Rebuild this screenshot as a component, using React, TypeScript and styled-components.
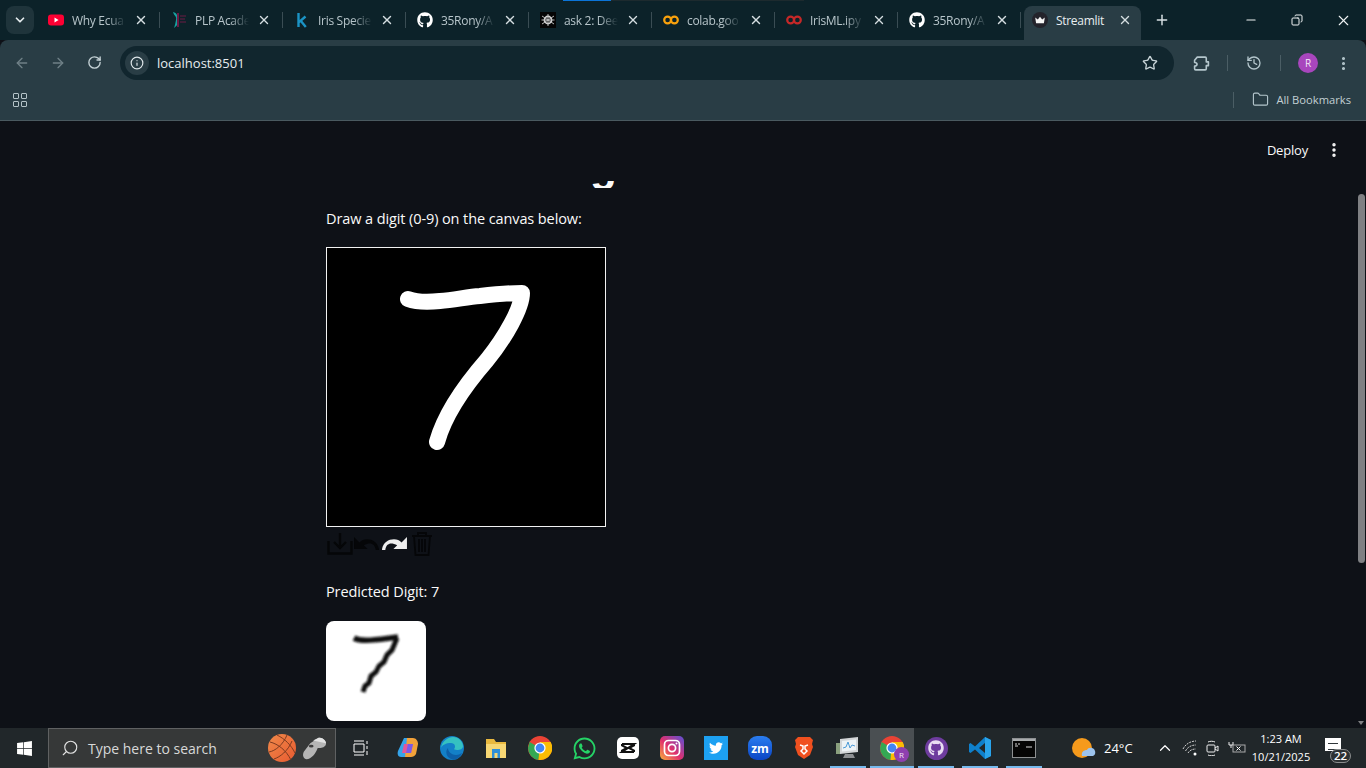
import { ReactNode } from "react";
import styled, { createGlobalStyle } from "styled-components";
import {
  ArrowLeft,
  ArrowRight,
  ChevronDown,
  ChevronUp,
  Copy,
  EllipsisVertical,
  Folder,
  History,
  Info,
  Minus,
  Plus,
  RotateCw,
  Search,
  Star,
  X,
} from "lucide-react";
import { FaGithub, FaTwitter, FaWhatsapp, FaWindows } from "react-icons/fa";

const GlobalStyle = createGlobalStyle`
  html, body {
    margin: 0;
    height: 100%;
    overflow: hidden;
    background: #0e1117;
  }
  * { box-sizing: border-box; }
`;

const Screen = styled.div`
  width: 1366px;
  height: 768px;
  display: flex;
  flex-direction: column;
  overflow: hidden;
  font-family: "Open Sans", "Liberation Sans", sans-serif;
`;

const Mirrored = styled.span`
  display: flex;
  transform: scaleX(-1);
`;

/* ---------- tab strip ---------- */

const TabStrip = styled.div`
  position: relative;
  height: 40px;
  flex: none;
  display: flex;
  align-items: flex-end;
  padding-left: 6px;
  background: #0c2229;
`;

const LoadBar = styled.div`
  position: absolute;
  top: 0;
  left: 563px;
  width: 241px;
  height: 1px;
  background: linear-gradient(to right, #0b74d8 0 48px, #1d2a2e 48px);
`;

const TabMenu = styled.div`
  width: 28px;
  height: 28px;
  margin: 0 3px 6px 0;
  border-radius: 8px;
  background: #1f343b;
  color: #e4ebee;
  display: flex;
  align-items: center;
  justify-content: center;
`;

const Tab = styled.div`
  position: relative;
  width: 123px;
  height: 40px;
  display: flex;
  align-items: center;
  padding: 0 11px;
  gap: 8px;
  color: #b7c5ca;

  &::after {
    content: "";
    position: absolute;
    right: 0;
    top: 12px;
    width: 1px;
    height: 16px;
    background: #3a4d54;
  }
`;

const ActiveTab = styled(Tab)`
  width: 117px;
  height: 34px;
  margin-left: 3px;
  padding: 0 8px 6px;
  border-radius: 8px 8px 0 0;
  background: #293d45;
  color: #e8eef0;

  &::after {
    display: none;
  }
`;

const Favicon = styled.span`
  width: 16px;
  height: 16px;
  flex: none;
  display: flex;
  align-items: center;
  justify-content: center;
`;

const TabTitle = styled.span<{ $fade?: boolean }>`
  width: 54px;
  flex: none;
  font-size: 12px;
  letter-spacing: -0.3px;
  white-space: nowrap;
  overflow: hidden;
  -webkit-mask-image: ${({ $fade }) =>
    $fade ? "linear-gradient(to right, #000 65%, transparent)" : "none"};
  mask-image: ${({ $fade }) =>
    $fade ? "linear-gradient(to right, #000 65%, transparent)" : "none"};
`;

const TabClose = styled.span`
  color: #d5dee1;
  display: flex;
`;

const NewTab = styled.div`
  margin: 0 0 12px 13px;
  color: #d7e0e3;
  display: flex;
`;

const WindowControls = styled.div`
  margin-left: auto;
  align-self: stretch;
  display: flex;
  color: #f0f3f4;
`;

const WindowButton = styled.div`
  width: 46px;
  display: flex;
  align-items: center;
  justify-content: center;
`;

/* ---------- toolbar ---------- */

const Toolbar = styled.div`
  height: 41px;
  flex: none;
  padding-top: 5px;
  display: flex;
  align-items: center;
  background: #293d45;
  border-radius: 8px 8px 0 0;
  color: #b4c3c8;
`;

const NavButton = styled.div<{ $dim?: boolean }>`
  width: 36px;
  display: flex;
  justify-content: center;
  color: ${({ $dim }) => ($dim ? "#6f8087" : "#c4d1d5")};
`;

const NavGroup = styled.div`
  width: 120px;
  padding-left: 4px;
  display: flex;
`;

const Omnibox = styled.div`
  width: 1054px;
  height: 34px;
  padding: 0 16px 0 5px;
  display: flex;
  align-items: center;
  border-radius: 17px;
  background: #11262e;
`;

const SiteChip = styled.div`
  width: 24px;
  height: 24px;
  border-radius: 50%;
  background: #293d45;
  color: #dfe7ea;
  display: flex;
  align-items: center;
  justify-content: center;
`;

const Url = styled.span`
  margin-left: 8px;
  font-size: 13px;
  color: #e6edf0;
  flex: 1;
`;

const ToolIcons = styled.div`
  flex: 1;
  display: flex;
  align-items: center;
`;

const ToolSeparator = styled.span<{ $left: number }>`
  width: 1px;
  height: 16px;
  margin-left: ${({ $left }) => $left}px;
  background: #4b5e65;
`;

const ToolIcon = styled.span<{ $left: number }>`
  margin-left: ${({ $left }) => $left}px;
  display: flex;
  color: #b4c6cc;
`;

const Avatar = styled.span`
  width: 20px;
  height: 20px;
  margin-left: 17px;
  border-radius: 50%;
  background: #a846bd;
  color: #f3e6f6;
  font-size: 10px;
  display: flex;
  align-items: center;
  justify-content: center;
`;

/* ---------- bookmarks ---------- */

const BookmarkBar = styled.div`
  height: 40px;
  flex: none;
  display: flex;
  align-items: center;
  padding: 0 15px 2px 13px;
  background: #293d45;
  border-bottom: 1px solid #4a5a60;
  color: #b4c6cc;
`;

const AppsGrid = styled.div`
  width: 14px;
  display: grid;
  grid-template-columns: 6px 6px;
  gap: 2px;
`;

const AppsCell = styled.span`
  height: 6px;
  border: 1.5px solid #b4c3c8;
  border-radius: 1px;
`;

const BookmarkSeparator = styled.span`
  width: 1px;
  height: 16px;
  margin-left: auto;
  background: #4b5e65;
`;

const BookmarkLabel = styled.span`
  margin-left: 7px;
  font-size: 11.2px;
  color: #c3d0d4;
  white-space: nowrap;
`;

/* ---------- streamlit page ---------- */

const Page = styled.div`
  flex: 1;
  min-height: 0;
  display: flex;
  background: #0e1117;
`;

const Main = styled.div`
  flex: 1;
  overflow: hidden;
`;

const AppHeader = styled.div`
  height: 59px;
  padding: 0 14px 2px 0;
  display: flex;
  align-items: center;
  justify-content: flex-end;
  gap: 17px;
  color: #fafafa;
`;

const DeployLabel = styled.span`
  font-size: 13px;
  font-weight: 500;
  letter-spacing: -0.2px;
`;

const Column = styled.div`
  width: 705px;
  margin: 0 auto;
`;

const ClippedTitle = styled.div`
  height: 7px;
  margin: 1px 0 20px;
  overflow: hidden;
  padding-left: 264px;
  color: #fafafa;
  font-family: "Liberation Sans", sans-serif;
  font-size: 44px;
  font-weight: 700;
  line-height: 44px;
`;

const TitleTail = styled.div`
  margin-top: -37px;
`;

const BodyText = styled.p`
  margin: 0;
  height: 22px;
  font-size: 14.5px;
  font-weight: 500;
  line-height: 22px;
  color: #fafafa;
  letter-spacing: -0.1px;
`;

const CanvasFrame = styled.div`
  width: 280px;
  height: 280px;
  margin-top: 17px;
  border: 1px solid #f2f2f2;
  background: #000;
`;

const CanvasTools = styled.div`
  height: 26px;
  margin-top: 3px;
  display: flex;
  align-items: center;
`;

const ToolSlot = styled.span<{ $left: number }>`
  margin-left: ${({ $left }) => $left}px;
  display: flex;
`;

const Prediction = styled(BodyText)`
  margin-top: 25px;
`;

const DigitThumb = styled.div`
  width: 100px;
  height: 100px;
  margin-top: 18px;
  border-radius: 8px;
  background: #fff;
  overflow: hidden;
`;

const Scrollbar = styled.div`
  position: relative;
  width: 9px;
  background: #0e1117;
`;

const ScrollThumb = styled.div`
  position: absolute;
  top: 73px;
  left: 1px;
  width: 7px;
  height: 369px;
  border-radius: 4px;
  background: #7f8083;
`;

const ScrollArrow = styled.div`
  position: absolute;
  bottom: 3px;
  left: 1px;
  width: 0;
  height: 0;
  border-left: 3.5px solid transparent;
  border-right: 3.5px solid transparent;
  border-top: 4px solid #7f8083;
`;

/* ---------- taskbar ---------- */

const Taskbar = styled.div`
  height: 40px;
  flex: none;
  display: flex;
  align-items: center;
  background: #21272a;
  color: #fff;
`;

const StartButton = styled.div`
  width: 48px;
  display: flex;
  justify-content: center;
`;

const SearchBox = styled.div`
  width: 288px;
  height: 40px;
  padding: 0 8px 0 12px;
  display: flex;
  align-items: center;
  gap: 5px;
  background: #363838;
  border: 1px solid #5f6162;
  color: #e3e3e3;
`;

const SearchLabel = styled.span`
  margin-left: 4px;
  flex: 1;
  font-size: 14px;
  color: #d8d8d8;
`;

const TaskIcons = styled.div`
  display: flex;
`;

const TaskIcon = styled.div<{ $open?: boolean; $active?: boolean; $width?: number }>`
  position: relative;
  width: ${({ $width }) => $width ?? 44}px;
  height: 40px;
  display: flex;
  align-items: center;
  justify-content: center;
  background: ${({ $active }) => ($active ? "#4a4f52" : "transparent")};

  &::after {
    content: "";
    display: ${({ $open }) => ($open ? "block" : "none")};
    position: absolute;
    left: ${({ $active }) => ($active ? "0" : "4px")};
    right: ${({ $active }) => ($active ? "0" : "4px")};
    bottom: 0;
    height: 2px;
    background: #76b9ed;
  }
`;

const Tray = styled.div`
  margin-left: auto;
  display: flex;
  align-items: center;
  height: 100%;
`;

const Temperature = styled.span`
  margin-left: 8px;
  width: 44px;
  font-size: 13px;
`;

const TrayIcon = styled.span<{ $left: number }>`
  margin-left: ${({ $left }) => $left}px;
  display: flex;
`;

const Clock = styled.div`
  width: 64px;
  margin-left: 3px;
  text-align: center;
  font-size: 11px;
  line-height: 18px;
`;

const Notice = styled.div`
  position: relative;
  width: 53px;
  height: 100%;
  padding-left: 12px;
  display: flex;
  align-items: center;
`;

const NoticeGlyph = styled.span`
  width: 16px;
  height: 13px;
  margin-top: -7px;
  background: repeating-linear-gradient(
      to bottom,
      transparent 0 3px,
      #30363a 3px 4px,
      transparent 4px 6px
    )
    3px 2px / 10px 10px no-repeat #fff;
`;

const NoticeBadge = styled.span`
  position: absolute;
  right: 15px;
  bottom: 5px;
  width: 21px;
  height: 14px;
  border-radius: 7px;
  border: 1px solid #8a8d8e;
  background: #2d3234;
  font-size: 11.5px;
  font-weight: 600;
  line-height: 12px;
  text-align: center;
`;

/* ---------- drawings ---------- */

const Svg = ({ size = 16, box = "0 0 16 16", children }: { size?: number; box?: string; children: ReactNode }) => (
  <svg width={size} height={size} viewBox={box} fill="none">
    {children}
  </svg>
);

const YoutubeIcon = () => (
  <Svg>
    <rect x="0" y="2.500" width="16" height="11" rx="3" fill="#ff0033" />
    <path d="M6.500 5.600 10.600 8l-4.100 2.400z" fill="#fff" />
  </Svg>
);

const PlpIcon = () => (
  <Svg>
    <path d="M2 0c1 4 4 4 3 8-.5 3-1 5-2 8 3-2 5-5 4.500-8C7 4 6 1 2 0z" fill="#17a0a0" />
    <path d="M6 1h2v14H6z" fill="#6d1a44" />
    <path d="M9 4h6M9 7h5M9 10h6" stroke="#6d1a44" strokeWidth="1" />
  </Svg>
);

const KaggleIcon = () => (
  <Svg>
    <path d="M4.500 1v14M11.500 4.500 5 10.200M6.500 8.600 11.800 15" stroke="#1b93c4" strokeWidth="2.400" />
  </Svg>
);

const SpiderIcon = () => (
  <Svg>
    <rect width="16" height="16" fill="#050505" />
    <circle cx="8" cy="8" r="3.600" stroke="#d8d8d8" strokeWidth="1.600" />
    <path d="M8 2v12M2 4l12 8M14 4 2 12M1.500 8h13" stroke="#bcbcbc" strokeWidth="1" />
  </Svg>
);

const ColabIcon = ({ color }: { color: string }) => (
  <Svg>
    <circle cx="4.600" cy="8" r="3.400" stroke={color} strokeWidth="2.200" />
    <circle cx="11.400" cy="8" r="3.400" stroke={color} strokeWidth="2.200" />
  </Svg>
);

const CrownIcon = () => (
  <Svg>
    <circle cx="8" cy="8" r="8" fill="#23232b" />
    <path d="M3.200 5.500 5.800 7.500 8 4.800l2.200 2.700 2.600-2-.9 5.700H4.100z" fill="#f5f5f5" />
  </Svg>
);

const PuzzleIcon = () => (
  <Svg size={17}>
    <path
      d="M4 2h7.500a1 1 0 0 1 1 1v3.500h2v3.500h-2v3a1 1 0 0 1-1 1H2.500a1 1 0 0 1-1-1v-2.500c1.800 0 2.300-1 2.300-1.800s-.8-1.700-2.300-1.700V5z"
      stroke="#b4c6cc"
      strokeWidth="1.500"
      strokeLinejoin="round"
    />
  </Svg>
);

const BasketballIcon = () => (
  <Svg size={28} box="0 0 28 28">
    <defs>
      <linearGradient id="ball" x1="0" y1="0" x2="1" y2="1">
        <stop offset="0" stopColor="#f08a4a" />
        <stop offset="1" stopColor="#e85a30" />
      </linearGradient>
    </defs>
    <circle cx="14" cy="14" r="14" fill="url(#ball)" />
    <path d="M2 8c8 2 16 8 21 18M9 1c8 4 14 10 18 18M1 18c6-1 14-7 18-17M6 25c6-2 14-8 18-18" stroke="#7c3a20" strokeWidth="1" />
  </Svg>
);

const WhistleIcon = () => (
  <Svg size={26} box="0 0 28 28">
    <path d="M10 9 19 3c4-1 8 3 8 6s-3 5-6 5h-3c-2 6-7 12-12 12C3 26 1 22 3 18z" fill="#b5b5b5" />
    <path d="M13 6 19 3c4-1 8 3 8 6l-9-2z" fill="#e2e2e2" />
    <ellipse cx="11" cy="12" rx="2.500" ry="1.500" fill="#3d3d3d" />
  </Svg>
);

const ChromeIcon = ({ size = 24 }: { size?: number }) => (
  <Svg size={size} box="0 0 24 24">
    <circle cx="12" cy="12" r="12" fill="#ea4335" />
    <path d="M12 12 1.600 6 0 12a12 12 0 0 0 10.500 11.900z" fill="#34a853" />
    <path d="M12 6h10.600A12 12 0 0 1 12 24l-1.500-.1z" fill="#fbbc04" />
    <circle cx="12" cy="12" r="5.600" fill="#fff" />
    <circle cx="12" cy="12" r="4.400" fill="#4285f4" />
  </Svg>
);

const CopilotIcon = () => (
  <Svg size={24} box="0 0 24 24">
    <path d="M8 2h5l-3 19H5c-3 0-4-3-3-6z" fill="#35a4ea" />
    <path d="M11 2h6c3 0 5 3 5 6l-2 10c-1 2-3 3-5 3H9z" fill="#f2a23a" />
    <path d="M8 8h9l-2 9H6z" fill="#e2569a" />
    <path d="M12 8h5l-2 9h-5z" fill="#7b5be6" />
  </Svg>
);

const EdgeIcon = () => (
  <Svg size={24} box="0 0 24 24">
    <circle cx="12" cy="12" r="12" fill="#1380c8" />
    <path d="M1 12C2 5 8 1 13 1c6 0 10 5 10 9 0 3-3 4-6 4-2 0-3-1-3-1 2-2 1-6-3-6-5 0-9 2-10 5z" fill="#35c1c1" />
    <path d="M11 23c-5-2-6-8-3-11 0 4 4 7 8 7 2 0 4-1 6-2-2 5-7 8-11 6z" fill="#0d5fa8" />
  </Svg>
);

const ExplorerIcon = () => (
  <Svg size={24} box="0 0 24 24">
    <path d="M2 3h8l2 3h10v16H2z" fill="#e9b93f" />
    <path d="M2 8h20v14H2z" fill="#f7d774" />
    <rect x="8" y="13" width="8" height="9" fill="#2f8fd8" />
    <rect x="10.500" y="17" width="3" height="5" fill="#f7d774" />
  </Svg>
);

const CapcutIcon = () => (
  <Svg size={22} box="0 0 22 22">
    <rect width="22" height="22" rx="5" fill="#fff" />
    <path d="M5 7h12L5 15h12M5 7v1.500l5 2.500-5 2.500V15M17 7v1.500L12 11l5 2.500V15" stroke="#111" strokeWidth="2" />
  </Svg>
);

const InstagramIcon = () => (
  <Svg size={24} box="0 0 24 24">
    <defs>
      <linearGradient id="ig" x1="0" y1="1" x2="1" y2="0">
        <stop offset="0" stopColor="#f9b13c" />
        <stop offset=".45" stopColor="#e1306c" />
        <stop offset="1" stopColor="#5b51d8" />
      </linearGradient>
    </defs>
    <rect width="24" height="24" rx="5" fill="url(#ig)" />
    <rect x="4.500" y="4.500" width="15" height="15" rx="4" stroke="#fff" strokeWidth="1.700" />
    <circle cx="12" cy="12" r="3.600" stroke="#fff" strokeWidth="1.700" />
    <circle cx="16.500" cy="7.500" r="1" fill="#fff" />
  </Svg>
);

const TwitterTile = styled.span`
  width: 24px;
  height: 24px;
  background: #1da1f2;
  display: flex;
  align-items: center;
  justify-content: center;
`;

const ZoomTile = styled.span`
  width: 24px;
  height: 24px;
  border-radius: 9px;
  background: linear-gradient(#2a7df0, #0b45c4);
  color: #fff;
  font-size: 12px;
  font-weight: 700;
  display: flex;
  align-items: center;
  justify-content: center;
`;

const BraveIcon = () => (
  <Svg size={24} box="0 0 24 24">
    <path d="M6 1h12l3 3-1 4 1 3-3 8-6 4-6-4-3-8 1-3-1-4z" fill="#f0501f" />
    <path d="M8 9l3 1v3l-2 2 3 3 3-3-2-2v-3l3-1" stroke="#fff" strokeWidth="1.500" />
  </Svg>
);

const MonitorIcon = () => (
  <Svg size={24} box="0 0 24 24">
    <path d="M4 3 22 1v15L4 18z" fill="#d3d6d8" />
    <path d="M6 5 20 3.500V14L6 15.500z" fill="#eef3f6" />
    <path d="M7 12l3-1 2-5 2 6 2-3 3 1" stroke="#4c9ad6" />
    <path d="M9 18h8l2 4H7z" fill="#8d9093" />
    <rect x="0" y="7" width="4" height="11" fill="#8aa07e" />
  </Svg>
);

const AvatarDot = styled.span`
  position: absolute;
  left: 24px;
  top: 19px;
  width: 15px;
  height: 15px;
  border-radius: 50%;
  background: #8e3fb0;
  color: #f2e6f6;
  font-size: 8px;
  line-height: 15px;
  text-align: center;
`;

const GithubBadge = styled.span`
  width: 23px;
  height: 23px;
  border-radius: 50%;
  background: #6e3c9e;
  display: flex;
  align-items: center;
  justify-content: center;
`;

const VscodeIcon = () => (
  <Svg size={24} box="0 0 24 24">
    <path d="M17 1l6 3v16l-6 3L7 13.500 2.500 17 1 16v-8l1.500-1L7 10.500z" fill="#0f80cc" />
    <path d="M17 1l6 3v16l-6 3z" fill="#29a4ec" />
    <path d="M17 7v10l-6-5z" fill="#21272a" />
  </Svg>
);

const CmdIcon = () => (
  <Svg size={24} box="0 0 24 24">
    <rect x=".5" y="2.500" width="23" height="19" fill="#050505" stroke="#8d9092" />
    <rect x="1" y="3" width="22" height="2" fill="#a8abad" />
    <path d="M3 8h2M6 8h2M3 10h3M14 11h6" stroke="#d8d8d8" />
  </Svg>
);

const WeatherIcon = () => (
  <Svg size={24} box="0 0 24 24">
    <circle cx="10" cy="12" r="10" fill="#f59a1c" />
    <path d="M10 20c-1-4 2-6 5-6 1-3 7-3 8 1 1 3-1 5-3 5z" fill="#9cc3ee" />
  </Svg>
);

const WifiIcon = () => (
  <Svg>
    <path d="M1 9c3-6 9-8 13-8M3.500 11c2-4 6-6 10.500-6M6 13c1.500-2.500 4-4 8-4" stroke="#d0d0d0" strokeDasharray="2 1" />
    <circle cx="13" cy="14" r="1.500" fill="#fff" />
  </Svg>
);

const MeetIcon = () => (
  <Svg>
    <rect x="2" y="5" width="8" height="7" rx="1" stroke="#eee" />
    <path d="M10 8l3-2v5l-3-2M3 2c2-1 5-1 7 0M3 15c2 1 5 1 7 0" stroke="#eee" />
  </Svg>
);

const BatteryIcon = () => (
  <Svg size={18} box="0 0 18 16">
    <path d="M1 2v3h4V2M3 5v3" stroke="#eee" />
    <rect x="5" y="5" width="12" height="7" stroke="#aaa" />
    <path d="M8.500 6.500l4 4m0-4-4 4" stroke="#fff" />
  </Svg>
);

const DownloadTool = () => (
  <svg width="26" height="23" viewBox="0 0 26 23" fill="none" stroke="#050608" strokeWidth="2.400">
    <path d="M1.500 9v12.500h23V9M13 1v15M7 10l6 6 6-6" />
  </svg>
);

const REDO_PATH =
  "M0 11C1 5 6 2 11 2c3 0 5 1 7 3l5-5v11H10.500l3.500-3.500C12 6.500 10 6 8.500 6 5.500 6 3.500 8 3 12H0z";

const RedoTool = ({ color }: { color: string }) => (
  <svg width="25" height="13" viewBox="0 0 23 12">
    <path d={REDO_PATH} fill={color} />
  </svg>
);

const TrashTool = () => (
  <svg width="22" height="25" viewBox="0 0 22 25" fill="none" stroke="#050608" strokeWidth="1.800">
    <path d="M1 5h20M7 5V2h8v3M3 5l1.500 19h13L19 5M8 8v13M11 8v13M14 8v13" />
  </svg>
);

const tabs: { title: string; icon: ReactNode }[] = [
  { title: "Why Ecua", icon: <YoutubeIcon /> },
  { title: "PLP Acade", icon: <PlpIcon /> },
  { title: "Iris Specie", icon: <KaggleIcon /> },
  { title: "35Rony/A", icon: <FaGithub size={16} color="#fff" /> },
  { title: "ask 2: Dee", icon: <SpiderIcon /> },
  { title: "colab.goo", icon: <ColabIcon color="#f9a10c" /> },
  { title: "IrisML.ipy", icon: <ColabIcon color="#c62828" /> },
  { title: "35Rony/A", icon: <FaGithub size={16} color="#fff" /> },
];

const App = () => (
  <Screen>
    <GlobalStyle />
    <TabStrip>
      <LoadBar />
      <TabMenu>
        <ChevronDown size={14} strokeWidth={3} />
      </TabMenu>
      {tabs.map((tab, index) => (
        <Tab key={index}>
          <Favicon>{tab.icon}</Favicon>
          <TabTitle $fade>{tab.title}</TabTitle>
          <TabClose>
            <X size={14} strokeWidth={2.4} />
          </TabClose>
        </Tab>
      ))}
      <ActiveTab>
        <Favicon>
          <CrownIcon />
        </Favicon>
        <TabTitle>Streamlit</TabTitle>
        <TabClose>
          <X size={14} strokeWidth={2.4} />
        </TabClose>
      </ActiveTab>
      <NewTab>
        <Plus size={16} strokeWidth={2.2} />
      </NewTab>
      <WindowControls>
        <WindowButton>
          <Minus size={14} />
        </WindowButton>
        <WindowButton>
          <Mirrored>
            <Copy size={12} />
          </Mirrored>
        </WindowButton>
        <WindowButton>
          <X size={17} strokeWidth={1.6} />
        </WindowButton>
      </WindowControls>
    </TabStrip>

    <Toolbar>
      <NavGroup>
        <NavButton $dim>
          <ArrowLeft size={16} />
        </NavButton>
        <NavButton $dim>
          <ArrowRight size={16} />
        </NavButton>
        <NavButton>
          <RotateCw size={15} strokeWidth={2.2} />
        </NavButton>
      </NavGroup>
      <Omnibox>
        <SiteChip>
          <Info size={14} />
        </SiteChip>
        <Url>localhost:8501</Url>
        <Star size={16} color="#c7d3d7" strokeWidth={2} />
      </Omnibox>
      <ToolIcons>
        <ToolIcon $left={19}>
          <PuzzleIcon />
        </ToolIcon>
        <ToolSeparator $left={17} />
        <ToolIcon $left={18}>
          <History size={16} strokeWidth={2} />
        </ToolIcon>
        <ToolSeparator $left={18} />
        <Avatar>R</Avatar>
        <ToolIcon $left={17}>
          <EllipsisVertical size={17} strokeWidth={2.4} />
        </ToolIcon>
      </ToolIcons>
    </Toolbar>

    <BookmarkBar>
      <AppsGrid>
        <AppsCell />
        <AppsCell />
        <AppsCell />
        <AppsCell />
      </AppsGrid>
      <BookmarkSeparator />
      <ToolIcon $left={18}>
        <Folder size={17} strokeWidth={1.6} />
      </ToolIcon>
      <BookmarkLabel>All Bookmarks</BookmarkLabel>
    </BookmarkBar>

    <Page>
      <Main>
        <AppHeader>
          <DeployLabel>Deploy</DeployLabel>
          <EllipsisVertical size={18} strokeWidth={2.6} />
        </AppHeader>
        <Column>
          <ClippedTitle>
            <TitleTail>g</TitleTail>
          </ClippedTitle>
          <BodyText>Draw a digit (0-9) on the canvas below:</BodyText>
          <CanvasFrame>
            <svg width="278" height="278" viewBox="0 0 278 278" fill="none">
              <path
                d="M81 51C92 55 104 54 113 53C127 52 140 49 153 48C170 46 185 45 195 45C195 60 178 90 160 112C140 135 118 165 110 194"
                stroke="#fff"
                strokeWidth="16"
                strokeLinecap="round"
                strokeLinejoin="round"
              />
            </svg>
          </CanvasFrame>
          <CanvasTools>
            <ToolSlot $left={1}>
              <DownloadTool />
            </ToolSlot>
            <ToolSlot $left={1}>
              <Mirrored>
                <RedoTool color="#050608" />
              </Mirrored>
            </ToolSlot>
            <ToolSlot $left={3}>
              <RedoTool color="#eeeeee" />
            </ToolSlot>
            <ToolSlot $left={4}>
              <TrashTool />
            </ToolSlot>
          </CanvasTools>
          <Prediction>Predicted Digit: 7</Prediction>
          <DigitThumb>
            <svg width="100" height="100" viewBox="0 0 100 100" fill="none">
              <defs>
                <filter id="soft">
                  <feGaussianBlur stdDeviation="0.8" />
                </filter>
              </defs>
              <g stroke="#111" filter="url(#soft)">
                <path d="M28 17C35 21 50 19 72 16" strokeWidth="5.500" />
                <path d="M71 17L66 29L61 34L58 41L53 45L50 51L45 55L43 62L39 65L37 71" strokeWidth="5" />
              </g>
            </svg>
          </DigitThumb>
        </Column>
      </Main>
      <Scrollbar>
        <ScrollThumb />
        <ScrollArrow />
      </Scrollbar>
    </Page>

    <Taskbar>
      <StartButton>
        <FaWindows size={17} />
      </StartButton>
      <SearchBox>
        <Mirrored>
          <Search size={18} strokeWidth={1.5} />
        </Mirrored>
        <SearchLabel>Type here to search</SearchLabel>
        <BasketballIcon />
        <WhistleIcon />
      </SearchBox>
      <TaskIcons>
        <TaskIcon $width={50}>
          <svg width="16" height="16" viewBox="0 0 16 16" fill="none" stroke="#fff">
            <path d="M1 1h10M1 15h10M1 4h10v8H1zM14 1v3M14 6v3M14 11v4" />
          </svg>
        </TaskIcon>
        <TaskIcon>
          <CopilotIcon />
        </TaskIcon>
        <TaskIcon>
          <EdgeIcon />
        </TaskIcon>
        <TaskIcon>
          <ExplorerIcon />
        </TaskIcon>
        <TaskIcon>
          <ChromeIcon />
        </TaskIcon>
        <TaskIcon>
          <FaWhatsapp size={25} color="#25d366" />
        </TaskIcon>
        <TaskIcon>
          <CapcutIcon />
        </TaskIcon>
        <TaskIcon>
          <InstagramIcon />
        </TaskIcon>
        <TaskIcon>
          <TwitterTile>
            <FaTwitter size={14} color="#fff" />
          </TwitterTile>
        </TaskIcon>
        <TaskIcon>
          <ZoomTile>zm</ZoomTile>
        </TaskIcon>
        <TaskIcon>
          <BraveIcon />
        </TaskIcon>
        <TaskIcon $open>
          <MonitorIcon />
        </TaskIcon>
        <TaskIcon $open $active>
          <ChromeIcon />
          <AvatarDot>R</AvatarDot>
        </TaskIcon>
        <TaskIcon $open>
          <GithubBadge>
            <FaGithub size={16} color="#e9def2" />
          </GithubBadge>
        </TaskIcon>
        <TaskIcon $open>
          <VscodeIcon />
        </TaskIcon>
        <TaskIcon $open>
          <CmdIcon />
        </TaskIcon>
      </TaskIcons>
      <Tray>
        <WeatherIcon />
        <Temperature>24°C</Temperature>
        <TrayIcon $left={8}>
          <ChevronUp size={18} strokeWidth={1.6} />
        </TrayIcon>
        <TrayIcon $left={8}>
          <WifiIcon />
        </TrayIcon>
        <TrayIcon $left={7}>
          <MeetIcon />
        </TrayIcon>
        <TrayIcon $left={7}>
          <BatteryIcon />
        </TrayIcon>
        <Clock>
          1:23 AM
          <br />
          10/21/2025
        </Clock>
        <Notice>
          <NoticeGlyph />
          <NoticeBadge>22</NoticeBadge>
        </Notice>
      </Tray>
    </Taskbar>
  </Screen>
);

export default App;
